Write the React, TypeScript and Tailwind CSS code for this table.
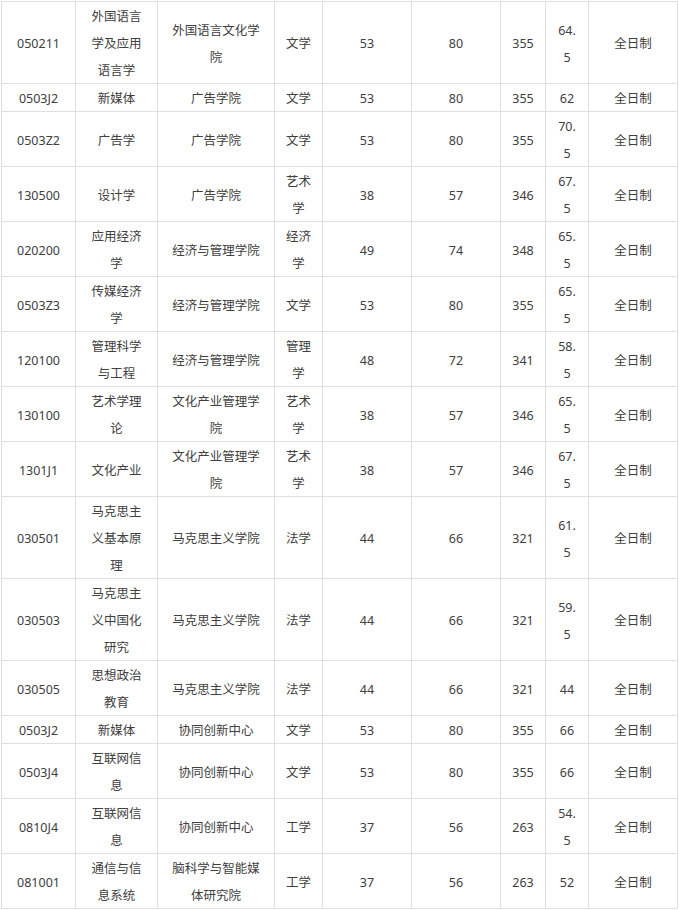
import React from "react";

type Row = { h: string; cells: string[][] };

const rows: Row[] = [
  { h: "h-[82px]", cells: [["050211"], ["外国语言", "学及应用", "语言学"], ["外国语言文化学", "院"], ["文学"], ["53"], ["80"], ["355"], ["64.", "5"], ["全日制"]] },
  { h: "h-[28px]", cells: [["0503J2"], ["新媒体"], ["广告学院"], ["文学"], ["53"], ["80"], ["355"], ["62"], ["全日制"]] },
  { h: "h-[55px]", cells: [["0503Z2"], ["广告学"], ["广告学院"], ["文学"], ["53"], ["80"], ["355"], ["70.", "5"], ["全日制"]] },
  { h: "h-[55px]", cells: [["130500"], ["设计学"], ["广告学院"], ["艺术", "学"], ["38"], ["57"], ["346"], ["67.", "5"], ["全日制"]] },
  { h: "h-[55px]", cells: [["020200"], ["应用经济", "学"], ["经济与管理学院"], ["经济", "学"], ["49"], ["74"], ["348"], ["65.", "5"], ["全日制"]] },
  { h: "h-[55px]", cells: [["0503Z3"], ["传媒经济", "学"], ["经济与管理学院"], ["文学"], ["53"], ["80"], ["355"], ["65.", "5"], ["全日制"]] },
  { h: "h-[55px]", cells: [["120100"], ["管理科学", "与工程"], ["经济与管理学院"], ["管理", "学"], ["48"], ["72"], ["341"], ["58.", "5"], ["全日制"]] },
  { h: "h-[55px]", cells: [["130100"], ["艺术学理", "论"], ["文化产业管理学", "院"], ["艺术", "学"], ["38"], ["57"], ["346"], ["65.", "5"], ["全日制"]] },
  { h: "h-[55px]", cells: [["1301J1"], ["文化产业"], ["文化产业管理学", "院"], ["艺术", "学"], ["38"], ["57"], ["346"], ["67.", "5"], ["全日制"]] },
  { h: "h-[82px]", cells: [["030501"], ["马克思主", "义基本原", "理"], ["马克思主义学院"], ["法学"], ["44"], ["66"], ["321"], ["61.", "5"], ["全日制"]] },
  { h: "h-[82px]", cells: [["030503"], ["马克思主", "义中国化", "研究"], ["马克思主义学院"], ["法学"], ["44"], ["66"], ["321"], ["59.", "5"], ["全日制"]] },
  { h: "h-[55px]", cells: [["030505"], ["思想政治", "教育"], ["马克思主义学院"], ["法学"], ["44"], ["66"], ["321"], ["44"], ["全日制"]] },
  { h: "h-[28px]", cells: [["0503J2"], ["新媒体"], ["协同创新中心"], ["文学"], ["53"], ["80"], ["355"], ["66"], ["全日制"]] },
  { h: "h-[55px]", cells: [["0503J4"], ["互联网信", "息"], ["协同创新中心"], ["文学"], ["53"], ["80"], ["355"], ["66"], ["全日制"]] },
  { h: "h-[55px]", cells: [["0810J4"], ["互联网信", "息"], ["协同创新中心"], ["工学"], ["37"], ["56"], ["263"], ["54.", "5"], ["全日制"]] },
  { h: "h-[55px]", cells: [["081001"], ["通信与信", "息系统"], ["脑科学与智能媒", "体研究院"], ["工学"], ["37"], ["56"], ["263"], ["52"], ["全日制"]] },
];

export default function App() {
  return (
    <div
      className="bg-white w-[679px] h-[910px] pt-px pl-px text-[#404040] text-[12.5px] leading-[27px]"
      style={{ fontFamily: '"Noto Sans", "Noto Sans CJK SC", sans-serif' }}
    >
      <div className="border-l border-t border-[#dfdfdf] w-[677px]">
        {rows.map((r, i) => (
          <div
            key={i}
            className={`grid grid-cols-[74px_82px_117px_48px_89px_89px_45px_43px_89px] ${r.h}`}
          >
            {r.cells.map((lines, j) => (
              <div
                key={j}
                className="border-r border-b border-[#dfdfdf] flex flex-col items-center justify-center text-center"
              >
                {lines.map((l, k) => (
                  <span key={k} className="block whitespace-nowrap translate-y-px">
                    {l}
                  </span>
                ))}
              </div>
            ))}
          </div>
        ))}
      </div>
    </div>
  );
}
